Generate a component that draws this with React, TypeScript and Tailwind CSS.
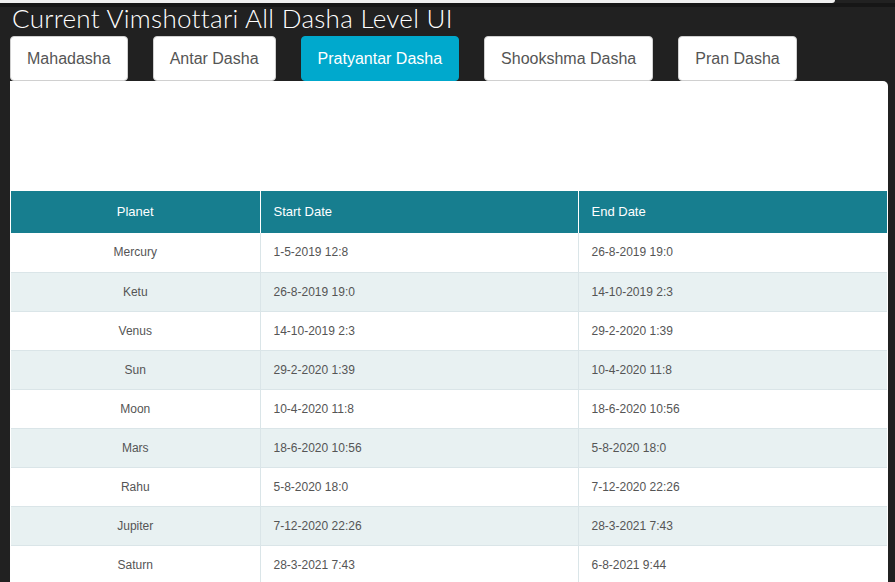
import React from 'react';

const tabs = ['Mahadasha', 'Antar Dasha', 'Pratyantar Dasha', 'Shookshma Dasha', 'Pran Dasha']

const rows = [
    ['Mercury', '1-5-2019 12:8', '26-8-2019 19:0'],
    ['Ketu', '26-8-2019 19:0', '14-10-2019 2:3'],
    ['Venus', '14-10-2019 2:3', '29-2-2020 1:39'],
    ['Sun', '29-2-2020 1:39', '10-4-2020 11:8'],
    ['Moon', '10-4-2020 11:8', '18-6-2020 10:56'],
    ['Mars', '18-6-2020 10:56', '5-8-2020 18:0'],
    ['Rahu', '5-8-2020 18:0', '7-12-2020 22:26'],
    ['Jupiter', '7-12-2020 22:26', '28-3-2021 7:43'],
    ['Saturn', '28-3-2021 7:43', '6-8-2021 9:44'],
]

const App: React.FC = () => {
    const [active, setActive] = React.useState(2)

    return (
        <div className="h-[582px] overflow-hidden bg-[#212121] font-['Liberation_Sans',Arial,sans-serif]">
            <div className="h-[3px] w-[835px] bg-[#f0f0f0] rounded-br-[3px]"></div>
            <div className="h-[4px] bg-[#161616]"></div>
            <h1 className="-mt-[7px] h-[36px] pl-[12px] text-[26px] leading-[36px] font-light tracking-[0.3px] text-white font-['Lato',sans-serif]">
                Current Vimshottari All Dasha Level UI
            </h1>
            <div className="flex gap-[25px] px-[10px]">
                {tabs.map((t, i) => (
                    <button
                        key={t}
                        onClick={() => setActive(i)}
                        className={
                            i === active
                                ? 'h-[45px] px-[16px] rounded-[4px] border border-[#00a8cc] bg-[#00a9cd] text-[16px] text-white'
                                : 'h-[45px] px-[16px] rounded-[4px] border border-[#d0d0d0] bg-white text-[16px] text-[#555]'
                        }
                    >
                        {t}
                    </button>
                ))}
            </div>
            <div className="ml-[10px] w-[878px] rounded-tr-[5px] bg-white pt-[110px] px-[1px]">
                <table className="w-full border-collapse text-[12px] text-[#555]">
                    <thead>
                        <tr className="h-[42px] bg-[#177e8f] text-[13px] text-white">
                            <th className="w-[249px] font-normal text-center border-r border-white">Planet</th>
                            <th className="w-[318px] font-normal text-left pl-[13px] border-r border-white">Start Date</th>
                            <th className="font-normal text-left pl-[13px]">End Date</th>
                        </tr>
                    </thead>
                    <tbody>
                        {rows.map((r, i) => (
                            <tr key={r[0]} className={i % 2 === 1 ? 'h-[39px] bg-[#e8f1f2]' : 'h-[39px] bg-white'}>
                                <td className="text-center border-b border-r border-[#dae5e8]">{r[0]}</td>
                                <td className="pl-[13px] border-b border-r border-[#dae5e8]">{r[1]}</td>
                                <td className="pl-[13px] border-b border-[#dae5e8]">{r[2]}</td>
                            </tr>
                        ))}
                    </tbody>
                </table>
            </div>
        </div>
    );
}

export default App
